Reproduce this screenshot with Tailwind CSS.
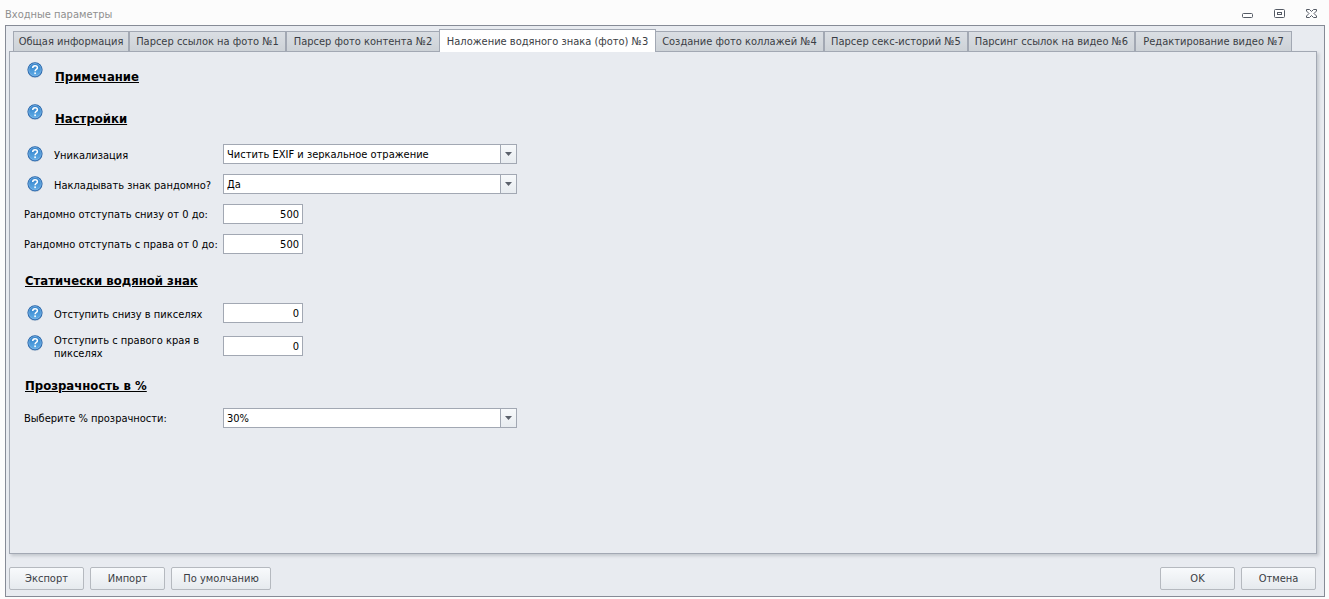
<!DOCTYPE html>
<html lang="ru">
<head>
<meta charset="utf-8">
<title>Входные параметры</title>
<script src="https://cdn.jsdelivr.net/npm/@tailwindcss/browser@4"></script>
</head>
<body class="flex h-screen flex-col bg-[#fcfcfc] pr-1 pb-0.5 pl-[5px] font-['DejaVu_Sans_Condensed','Noto_Sans',sans-serif] text-[11px] leading-[13px] text-black">
<svg class="absolute size-0" aria-hidden="true">
  <defs>
    <linearGradient id="ball" x1="0" y1="0" x2="0" y2="1">
      <stop offset="0" stop-color="#2f7fc8"/><stop offset="1" stop-color="#62aee8"/>
    </linearGradient>
    <symbol id="help" viewBox="0 0 16 16">
      <circle cx="8" cy="8.5" r="7.5" fill="#b9c6d6"/>
      <circle cx="8" cy="7.8" r="7.5" fill="#1d5fa8"/>
      <circle cx="8" cy="7.8" r="6.3" fill="url(#ball)" stroke="#8fc0ea" stroke-width=".7"/>
      <path d="M5.7 6C5.7 2.9 10.4 2.9 10.4 5.8C10.4 7.5 8.1 7.3 8.1 9.2" fill="none" stroke="#fff" stroke-width="1.5"/>
      <rect x="7.3" y="10.4" width="1.6" height="1.7" fill="#fff"/>
    </symbol>
  </defs>
</svg>

<header class="flex h-[25px] shrink-0 items-start justify-between pr-[7px] pt-[7px] text-[#8f8f8f]">
  <h1 class="pt-px">Входные параметры</h1>
  <div class="flex gap-5">
    <button aria-label="Свернуть"><svg class="h-3 w-3" viewBox="0 0 12 12" fill="#fff" stroke="#545a64"><rect x=".5" y="6.5" width="10" height="4" rx="1"/></svg></button>
    <button aria-label="Развернуть"><svg class="h-3 w-3" viewBox="0 0 12 12" fill="#fff" stroke="#545a64"><rect x=".5" y="2.5" width="10" height="8" rx="1"/><rect x="3.5" y="5.5" width="4" height="2"/></svg></button>
    <button aria-label="Закрыть"><svg class="h-3 w-3" viewBox="0 0 12 12" fill="#fff" stroke="#545a64"><path d="M.5 2.5H3.5L5.5 4.5L7.5 2.5H10.5V4L8 6.5L10.5 9V10.5H7.5L5.5 8.5L3.5 10.5H.5V9L3 6.5L.5 4Z"/></svg></button>
  </div>
</header>

<main class="flex min-h-0 flex-1 flex-col border border-[#868b96] bg-[#e8ebf0] pr-[7px] pb-1.5 pl-[3px] pt-[3px] text-[#3a3d44]">
  <nav class="z-10 -mb-px ml-1 flex items-end" role="tablist">
    <button role="tab" class="h-[21px] w-[116px] whitespace-nowrap border border-[#a2a8b3] bg-linear-to-b from-[#dadee3] to-[#cdd2d7]">Общая информация</button>
    <button role="tab" class="h-[21px] w-[157px] whitespace-nowrap border border-[#a2a8b3] bg-linear-to-b from-[#dadee3] to-[#cdd2d7]">Парсер ссылок на фото №1</button>
    <button role="tab" class="h-[21px] w-[153px] whitespace-nowrap border border-r-0 border-[#a2a8b3] bg-linear-to-b from-[#dadee3] to-[#cdd2d7]">Парсер фото контента №2</button>
    <button role="tab" aria-selected="true" class="h-[23px] w-[217px] whitespace-nowrap border border-b-0 border-[#a2a8b3] bg-white">Наложение водяного знака (фото) №3</button>
    <button role="tab" class="h-[21px] w-[168px] whitespace-nowrap border border-l-0 border-[#a2a8b3] bg-linear-to-b from-[#dadee3] to-[#cdd2d7]">Создание фото коллажей №4</button>
    <button role="tab" class="h-[21px] w-[144px] whitespace-nowrap border border-[#a2a8b3] bg-linear-to-b from-[#dadee3] to-[#cdd2d7]">Парсер секс-историй №5</button>
    <button role="tab" class="h-[21px] w-[167px] whitespace-nowrap border border-[#a2a8b3] bg-linear-to-b from-[#dadee3] to-[#cdd2d7]">Парсинг ссылок на видео №6</button>
    <button role="tab" class="h-[21px] w-[157px] whitespace-nowrap border border-[#a2a8b3] bg-linear-to-b from-[#dadee3] to-[#cdd2d7]">Редактирование видео №7</button>
  </nav>

  <form id="params" class="flex-1 border border-[#a2a8b3] pt-2.5 pl-3.5 text-black shadow-[2px_2px_3px_#c3c7cd]">
    <div class="flex items-start pl-[3px]">
      <svg class="mr-[11px] h-4 w-4"><use href="#help"/></svg>
      <h2 class="mt-[7px] pl-px text-[13px] leading-4 font-bold underline">Примечание</h2>
    </div>
    <div class="mt-[19px] flex items-start pl-[3px]">
      <svg class="mr-[11px] h-4 w-4"><use href="#help"/></svg>
      <h2 class="mt-[7px] pl-px text-[13px] leading-4 font-bold underline">Настройки</h2>
    </div>
    <div class="mt-[17px] flex items-center">
      <div class="flex w-[199px] items-center pl-[3px]">
        <svg class="mr-[11px] h-4 w-4"><use href="#help"/></svg>
        <label for="uniq" class="pt-0.5">Уникализация</label>
      </div>
      <div class="relative w-[294px]">
        <select id="uniq" class="block h-5 w-full appearance-none border border-[#a2a8b3] bg-white pl-[3px]"><option>Чистить EXIF и зеркальное отражение</option></select>
        <span class="pointer-events-none absolute inset-y-px right-px flex w-4 items-center justify-center border-l border-[#a2a8b3] bg-linear-to-b from-[#f7f9fb] to-[#e8ecf0]"><svg class="h-1 w-[7px]" viewBox="0 0 7 4"><path d="M0 0H7L3.5 4Z" fill="#5b616b"/></svg></span>
      </div>
    </div>
    <div class="mt-2.5 flex items-center">
      <div class="flex w-[199px] items-center pl-[3px]">
        <svg class="mr-[11px] h-4 w-4"><use href="#help"/></svg>
        <label for="random" class="pt-0.5">Накладывать знак рандомно?</label>
      </div>
      <div class="relative w-[294px]">
        <select id="random" class="block h-5 w-full appearance-none border border-[#a2a8b3] bg-white pl-[3px]"><option>Да</option></select>
        <span class="pointer-events-none absolute inset-y-px right-px flex w-4 items-center justify-center border-l border-[#a2a8b3] bg-linear-to-b from-[#f7f9fb] to-[#e8ecf0]"><svg class="h-1 w-[7px]" viewBox="0 0 7 4"><path d="M0 0H7L3.5 4Z" fill="#5b616b"/></svg></span>
      </div>
    </div>
    <div class="mt-2.5 flex items-center">
      <label for="rbottom" class="w-[199px]">Рандомно отступать снизу от 0 до:</label>
      <input id="rbottom" value="500" class="h-5 w-20 border border-[#a2a8b3] bg-white pr-[3px] text-right">
    </div>
    <div class="mt-2.5 flex items-center">
      <label for="rright" class="w-[199px]">Рандомно отступать с права от 0 до:</label>
      <input id="rright" value="500" class="h-5 w-20 border border-[#a2a8b3] bg-white pr-[3px] text-right">
    </div>
    <h2 class="mt-[19px] pl-px text-[13px] leading-4 font-bold underline">Статически водяной знак</h2>
    <div class="mt-3.5 flex items-center">
      <div class="flex w-[199px] items-center pl-[3px]">
        <svg class="mr-[11px] h-4 w-4"><use href="#help"/></svg>
        <label for="bottom" class="pt-0.5">Отступить снизу в пикселях</label>
      </div>
      <input id="bottom" value="0" class="h-5 w-20 border border-[#a2a8b3] bg-white pr-[3px] text-right">
    </div>
    <div class="mt-[9px] flex items-center">
      <div class="flex w-[199px] items-start pl-[3px]">
        <svg class="mt-[3px] mr-[11px] h-4 w-4 shrink-0"><use href="#help"/></svg>
        <label for="right" class="w-[160px] pt-0.5">Отступить с правого края в пикселях</label>
      </div>
      <input id="right" value="0" class="h-5 w-20 border border-[#a2a8b3] bg-white pr-[3px] text-right">
    </div>
    <h2 class="mt-[18px] pl-px text-[13px] leading-4 font-bold underline">Прозрачность в %</h2>
    <div class="mt-3.5 flex items-center">
      <label for="alpha" class="w-[199px]">Выберите % прозрачности:</label>
      <div class="relative w-[294px]">
        <select id="alpha" class="block h-5 w-full appearance-none border border-[#a2a8b3] bg-white pl-[3px]"><option>30%</option></select>
        <span class="pointer-events-none absolute inset-y-px right-px flex w-4 items-center justify-center border-l border-[#a2a8b3] bg-linear-to-b from-[#f7f9fb] to-[#e8ecf0]"><svg class="h-1 w-[7px]" viewBox="0 0 7 4"><path d="M0 0H7L3.5 4Z" fill="#5b616b"/></svg></span>
      </div>
    </div>
  </form>

  <footer class="mt-[13px] flex gap-1.5 pr-px">
    <button class="h-[23px] w-[75px] rounded-xs border border-[#b5b9bf] bg-linear-to-b from-[#f8fafc] to-[#e6eaee]">Экспорт</button>
    <button class="h-[23px] w-[75px] rounded-xs border border-[#b5b9bf] bg-linear-to-b from-[#f8fafc] to-[#e6eaee]">Импорт</button>
    <button class="h-[23px] w-[100px] rounded-xs border border-[#b5b9bf] bg-linear-to-b from-[#f8fafc] to-[#e6eaee]">По умолчанию</button>
    <button form="params" class="ml-auto h-[23px] w-[75px] rounded-xs border border-[#b5b9bf] bg-linear-to-b from-[#f8fafc] to-[#e6eaee]">OK</button>
    <button class="h-[23px] w-[75px] rounded-xs border border-[#b5b9bf] bg-linear-to-b from-[#f8fafc] to-[#e6eaee]">Отмена</button>
  </footer>
</main>
</body>
</html>
